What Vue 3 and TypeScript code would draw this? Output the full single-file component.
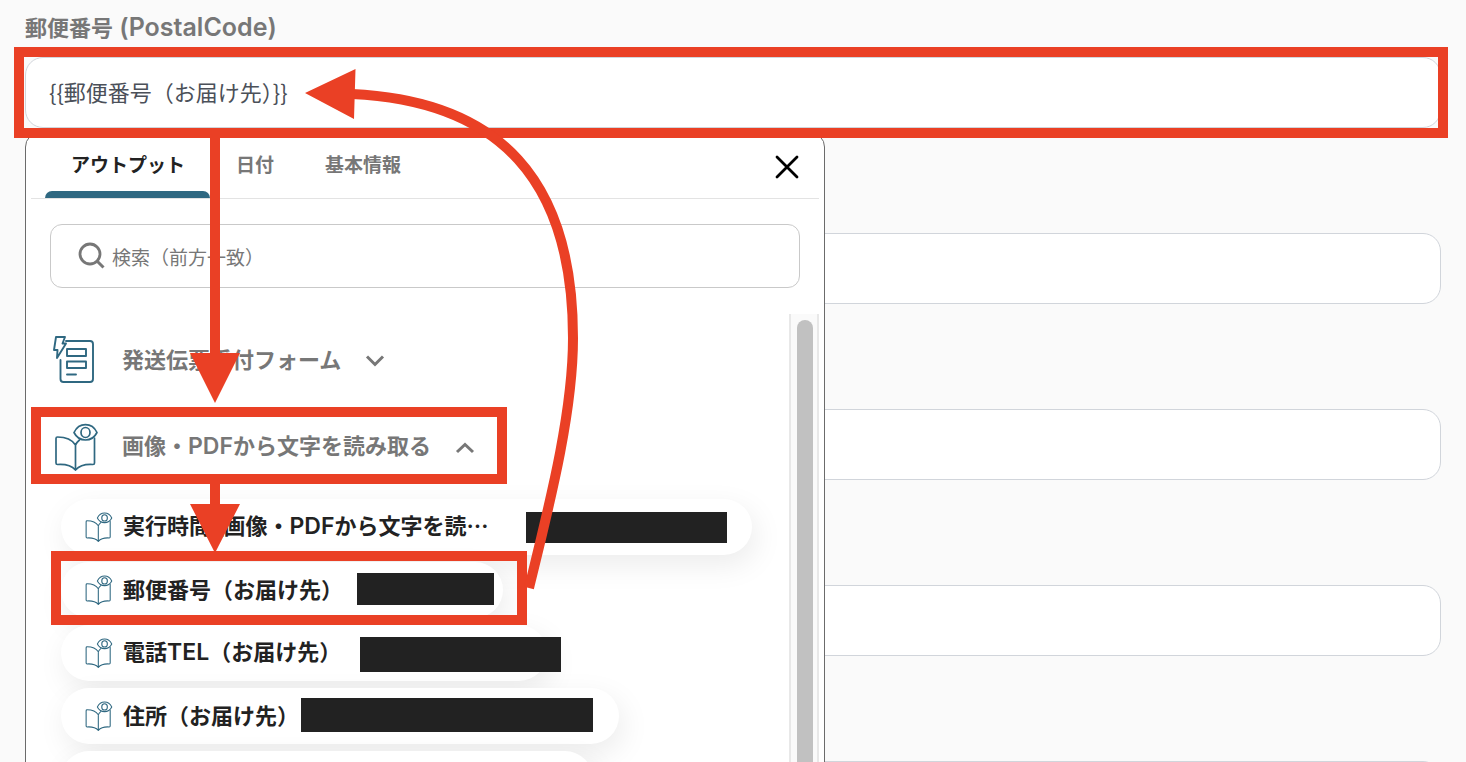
<script setup lang="ts">
import { ref } from 'vue'

interface Mask {
  left: number
  top: number
  width: number
  height: number
}

interface OutputItem {
  name: string
  width: number
  mask?: Mask
}

const postalCode = ref('{{郵便番号（お届け先）}}')
const keyword = ref('')
const activeTab = ref('アウトプット')
const tabs: string[] = ['アウトプット', '日付', '基本情報']
const otherFields = ref<string[]>(['', '', '', ''])

const items: OutputItem[] = [
  { name: '実行時間_画像・PDFから文字を読…', width: 691, mask: { left: 465, top: 13, width: 201, height: 31 } },
  { name: '郵便番号（お届け先）', width: 442, mask: { left: 296, top: 11, width: 137, height: 32 } },
  { name: '電話TEL（お届け先）', width: 486, mask: { left: 299, top: 12, width: 201, height: 35 } },
  { name: '住所（お届け先）', width: 558, mask: { left: 240, top: 10, width: 292, height: 34 } },
  { name: '', width: 532 },
]

// Latin runs are set in their own family, so names are split around them
function runs(name: string): { text: string; latin: boolean }[] {
  return name
    .split(/([A-Z]+)/)
    .filter(Boolean)
    .map((text) => ({ text, latin: /^[A-Z]+$/.test(text) }))
}

function maskStyle(mask: Mask) {
  return {
    left: `${mask.left}px`,
    top: `${mask.top}px`,
    width: `${mask.width}px`,
    height: `${mask.height}px`,
  }
}
</script>

<template>
  <main class="page">
    <form class="form" @submit.prevent>
      <div class="field">
        <label class="label" for="postal">郵便番号<span class="label-latin"> (PostalCode)</span></label>
        <div class="control">
          <input id="postal" v-model="postalCode" class="input" type="text" />
          <div class="mark mark-field"></div>

          <section class="panel">
            <header class="tabs">
              <button
                v-for="tab in tabs"
                :key="tab"
                type="button"
                class="tab"
                :class="{ active: tab === activeTab }"
                @click="activeTab = tab"
              >{{ tab }}</button>
              <button type="button" class="close" aria-label="閉じる">
                <svg width="24" height="24" viewBox="0 0 24 24">
                  <path d="M2 2 22 22M22 2 2 22" fill="none" stroke="#000" stroke-width="2.8" stroke-linecap="round" />
                </svg>
              </button>
            </header>

            <label class="search">
              <svg width="28" height="28" viewBox="0 0 28 28">
                <circle cx="12" cy="12" r="10" fill="none" stroke="#777" stroke-width="2.8" />
                <path d="M19 19 25.500 25.500" fill="none" stroke="#777" stroke-width="3" />
              </svg>
              <input v-model="keyword" type="text" placeholder="検索（前方一致）" aria-label="検索" />
            </label>

            <div class="results">
              <div class="groups">
                <button type="button" class="group">
                  <svg class="group-icon" width="48" height="50" viewBox="0 0 48 50">
                    <g fill="none" stroke="#2f6881" stroke-width="1.900" stroke-linejoin="round" stroke-linecap="round">
                      <path d="M15 6H39Q42 6 42 9V44Q42 47 39 47H12.500Q9.500 47 9.500 44V25" />
                      <path d="M5 2H14L11.500 8.500H15L6 23 6.500 15H3Z" />
                      <path d="M16 14H35V21H16ZM16 26.500H35V33H16ZM16 39.500H25" />
                    </g>
                  </svg>
                  <span class="name">発送伝票受付フォーム</span>
                  <svg class="chevron" width="20" height="14" viewBox="0 0 20 14">
                    <path d="M2 3.500 10 11.500 18 3.500" fill="none" stroke="#777" stroke-width="3" />
                  </svg>
                </button>

                <button type="button" class="group open">
                  <svg class="group-icon" width="48" height="50" viewBox="0 0 48 50">
                    <g fill="none" stroke="#2f6881" stroke-width="1.700" stroke-linejoin="round" stroke-linecap="round">
                      <path d="M24.500 23C20 16 13 15 6.500 15Q5 15 5 16.500V41Q5 42.500 6.500 42.500C14 42 20 43 24.500 48C29 43 35 42 42 42.500Q43.500 42.500 43.500 41V16M24.500 23V48M24.500 23Q26 20 28.500 18" />
                      <path d="M23 10.500C28 0 41 0 46 10.500C41 20.500 28 20.500 23 10.500Z" />
                      <ellipse cx="34.500" cy="10.500" rx="4.500" ry="5" />
                    </g>
                  </svg>
                  <span class="name">画像・<span class="latin">PDF</span>から文字を読み取る</span>
                  <svg class="chevron" width="20" height="14" viewBox="0 0 20 14">
                    <path d="M2 12 10 4.500 18 12" fill="none" stroke="#777" stroke-width="3" />
                  </svg>
                </button>

                <ul class="items">
                  <li v-for="(item, i) in items" :key="i">
                    <button type="button" class="pill" :style="{ width: `${item.width}px` }">
                      <svg width="30" height="32" viewBox="0 0 48 50">
                        <g fill="none" stroke="#2f6881" stroke-width="1.700" stroke-linejoin="round" stroke-linecap="round">
                          <path d="M24.500 23C20 16 13 15 6.500 15Q5 15 5 16.500V41Q5 42.500 6.500 42.500C14 42 20 43 24.500 48C29 43 35 42 42 42.500Q43.500 42.500 43.500 41V16M24.500 23V48M24.500 23Q26 20 28.500 18" />
                          <path d="M23 10.500C28 0 41 0 46 10.500C41 20.500 28 20.500 23 10.500Z" />
                          <ellipse cx="34.500" cy="10.500" rx="4.500" ry="5" />
                        </g>
                      </svg>
                      <span class="name"><span
                        v-for="(run, r) in runs(item.name)"
                        :key="r"
                        :class="{ latin: run.latin }"
                      >{{ run.text }}</span></span>
                      <i v-if="item.mask" class="mask" :style="maskStyle(item.mask)"></i>
                    </button>
                  </li>
                </ul>
              </div>
              <div class="scrollbar"><div class="thumb"></div></div>
            </div>
          </section>
        </div>
      </div>

      <div v-for="(_, i) in otherFields" :key="i" class="field">
        <div class="label"></div>
        <input v-model="otherFields[i]" class="input" type="text" aria-label="入力欄" />
      </div>
    </form>

    <svg class="annotations" width="620" height="640" viewBox="0 0 620 640" aria-hidden="true">
      <g fill="none" stroke="#ea4025" stroke-width="10">
        <rect x="36" y="412" width="466" height="67" />
        <rect x="56" y="556" width="466" height="64" />
        <path d="M215 137V356M215 483V506" />
        <path d="M529 588C548 510 573 415 573 338C573 180 500 101 352 94" />
      </g>
      <path d="M190 353H240L215 403ZM190 504H240L215 553ZM305 93 355.500 69 354 119Z" fill="#ea4025" />
    </svg>
  </main>
</template>

<style>
body {
  margin: 0;
  background: #fafafa;
}
</style>

<style scoped>
.page {
  position: relative;
  height: 100vh;
  overflow: hidden;
  background: #fafafa;
  font-family: "Noto Sans CJK JP", sans-serif;
}
.page *,
.page {
  box-sizing: border-box;
}
button,
input {
  font-family: inherit;
}
button {
  border: 0;
  padding: 0;
  background: none;
  cursor: pointer;
}
svg {
  display: block;
  flex: none;
}
.form {
  padding: 0 25px;
}
.field {
  display: flex;
  flex-direction: column;
  margin-bottom: 48px;
}
.label {
  height: 57px;
  line-height: 52px;
  color: #777;
  font-size: 22px;
  font-weight: 700;
}
.label-latin {
  font-family: Inter, sans-serif;
  font-size: 25px;
  font-weight: 600;
}
.latin {
  font-family: Inter, sans-serif;
  font-size: 23px;
  font-weight: 600;
}
.name {
  padding-bottom: 4px;
  line-height: 32px;
}
.control {
  position: relative;
}
.input {
  display: block;
  width: 100%;
  height: 71px;
  padding: 0 23px 4px;
  border: 1px solid #d1d5db;
  border-radius: 18px;
  background: #fff;
  color: #4b5059;
  font-size: 22px;
  outline: 0;
}
.mark {
  position: absolute;
  border: 10px solid #ea4025;
  pointer-events: none;
}
.mark-field {
  inset: -10px -7px -10px -11px;
  z-index: 3;
}
.panel {
  position: absolute;
  top: 75px;
  left: 0;
  z-index: 2;
  display: flex;
  flex-direction: column;
  width: 800px;
  height: 680px;
  padding: 0 5px;
  border: 1px solid #6b6b6b;
  border-radius: 15px;
  background: #fff;
}
.tabs {
  display: flex;
  flex: none;
  height: 66px;
  padding: 0 20px 0 14px;
  border-bottom: 1px solid #e3e3e3;
}
.tab {
  position: relative;
  padding: 0 25px 4px 26px;
  color: #777;
  font-size: 19px;
  font-weight: 700;
}
.tab.active {
  color: #222;
}
.tab.active::after {
  content: "";
  position: absolute;
  right: 0;
  bottom: 0;
  left: 0;
  height: 7px;
  border-radius: 7px 7px 0 0;
  background: #2f6881;
}
.close {
  margin-left: auto;
  padding-top: 2px;
}
.search {
  display: flex;
  flex: none;
  align-items: center;
  gap: 6px;
  height: 64px;
  margin: 25px 19px 0;
  padding: 0 27px;
  border: 1px solid #c9c9c9;
  border-radius: 12px;
}
.search input {
  flex: 1;
  min-width: 0;
  padding: 0;
  border: 0;
  outline: 0;
  background: none;
  color: #222;
  font-size: 19px;
}
.search input::placeholder {
  color: #777;
  opacity: 1;
}
.results {
  display: flex;
  flex: 1;
  min-height: 0;
  margin-top: 26px;
}
.groups {
  flex: 1;
  overflow: hidden;
  padding: 2px 0 0 20px;
}
.group {
  display: flex;
  align-items: center;
  height: 87px;
  color: #777;
  font-size: 22px;
  font-weight: 700;
}
.group-icon {
  margin-right: 23px;
}
.chevron {
  margin-left: 24px;
}
.items {
  display: flex;
  flex-direction: column;
  gap: 7px;
  margin: 0;
  padding: 9px 0 0 10px;
  list-style: none;
}
.pill {
  position: relative;
  display: flex;
  align-items: center;
  gap: 10px;
  height: 56px;
  padding: 0 22px;
  border-radius: 28px;
  background: #fff;
  box-shadow: 4px 10px 30px rgba(0, 0, 0, 0.08);
  color: #222;
  font-size: 22px;
  font-weight: 700;
  white-space: nowrap;
}
.mask {
  position: absolute;
  background: #222;
}
.scrollbar {
  width: 30px;
  padding: 6px 4px 0 6px;
  border: solid #e8e8e8;
  border-width: 0 2px;
  background: #fafafa;
}
.thumb {
  width: 16px;
  height: 600px;
  border-radius: 8px;
  background: #c1c1c1;
}
.annotations {
  position: absolute;
  top: 0;
  left: 0;
  z-index: 4;
  pointer-events: none;
}
</style>
